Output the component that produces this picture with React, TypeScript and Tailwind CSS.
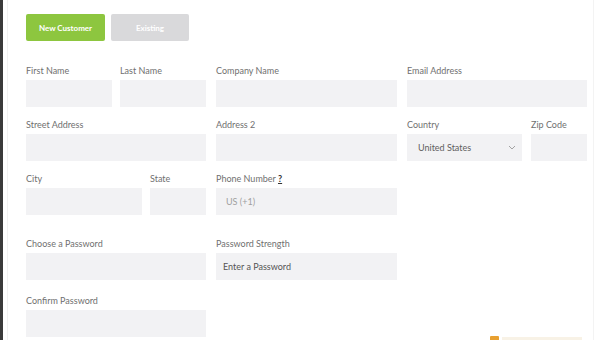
import React from "react";

const font = { fontFamily: "Lato, 'Open Sans', sans-serif" };

function Label({ children }: { children: React.ReactNode }) {
  return <div className="h-[14px] leading-[14px] text-[9px] text-[#707070] mb-[2px] whitespace-nowrap">{children}</div>;
}

function Input({ w, children }: { w: string; children?: React.ReactNode }) {
  return (
    <div className={`${w} h-[27px] bg-[#f2f2f4] flex items-center text-[9px]`}>{children}</div>
  );
}

export default function App() {
  return (
    <div className="w-[600px] h-[340px] bg-white overflow-hidden relative flex" style={font}>
      <div className="w-[3px] h-full bg-[#3a3a3a]" />
      <div className="w-[4px] h-full" />
      <div className="w-px h-full bg-[#f1f1f1]" />
      <div className="flex-1 pl-[18px] pt-[14px]">
        <div className="flex gap-[6px]">
          <div className="w-[79px] h-[27px] bg-[#8dc63f] rounded-[2px] text-white text-[8px] font-bold flex items-center justify-center">New Customer</div>
          <div className="w-[78px] h-[27px] bg-[#d9d9db] rounded-[2px] text-white text-[8px] font-bold flex items-center justify-center">Existing</div>
        </div>

        <div className="mt-[23px] flex gap-[10px]">
          <div className="flex gap-[8px]">
            <div><Label>First Name</Label><Input w="w-[86px]" /></div>
            <div><Label>Last Name</Label><Input w="w-[86px]" /></div>
          </div>
          <div><Label>Company Name</Label><Input w="w-[181px]" /></div>
          <div><Label>Email Address</Label><Input w="w-[180px]" /></div>
        </div>

        <div className="mt-[11px] flex gap-[10px]">
          <div><Label>Street Address</Label><Input w="w-[180px]" /></div>
          <div><Label>Address 2</Label><Input w="w-[181px]" /></div>
          <div className="flex gap-[9px]">
            <div>
              <Label>Country</Label>
              <Input w="w-[115px]">
                <div className="flex-1 pl-[11px] text-[#5f5f5f]">United States</div>
                <svg width="8" height="5" viewBox="0 0 8 5" className="mr-[6px]">
                  <path d="M1 1 L4 4 L7 1" fill="none" stroke="#9a9a9a" strokeWidth="0.9" />
                </svg>
              </Input>
            </div>
            <div><Label>Zip Code</Label><Input w="w-[56px]" /></div>
          </div>
        </div>

        <div className="mt-[11px] flex gap-[10px]">
          <div className="flex gap-[8px]">
            <div><Label>City</Label><Input w="w-[116px]" /></div>
            <div><Label>State</Label><Input w="w-[56px]" /></div>
          </div>
          <div>
            <Label>
              Phone Number <span className="underline font-bold text-[#333]">?</span>
            </Label>
            <Input w="w-[181px]"><span className="pl-[10px] text-[#a0a0a0]">US (+1)</span></Input>
          </div>
        </div>

        <div className="mt-[22px] flex gap-[10px]">
          <div><Label>Choose a Password</Label><Input w="w-[180px]" /></div>
          <div>
            <Label>Password Strength</Label>
            <Input w="w-[181px]"><span className="pl-[7px] text-[#555]">Enter a Password</span></Input>
          </div>
        </div>

        <div className="mt-[14px] flex">
          <div><Label>Confirm Password</Label><Input w="w-[180px]" /></div>
        </div>
      </div>
      <div className="absolute left-[490px] top-[336px] w-[9px] h-[6px] bg-[#e8a030] rounded-[1px]" />
      <div className="absolute left-[502px] top-[337px] w-[80px] h-[3px] bg-[#f8f2e6]" />
      <div className="absolute left-[593px] top-0 w-px h-full bg-[#f3f3f3]" />
    </div>
  );
}
